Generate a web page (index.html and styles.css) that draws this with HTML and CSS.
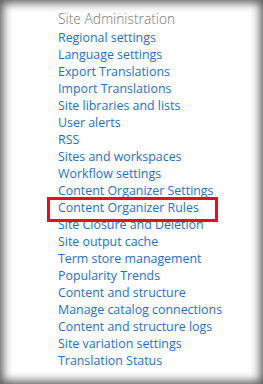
FILE: index.html
```html
<!DOCTYPE html>
<html>
<head>
<meta charset="utf-8">
<link rel="stylesheet" href="styles.css">
</head>
<body>
<div class="frame">
  <div class="panel">
    <h3 class="title">Site Administration</h3>
    <ul class="links">
      <li><a href="#">Regional settings</a></li>
      <li><a href="#">Language settings</a></li>
      <li><a href="#">Export Translations</a></li>
      <li><a href="#">Import Translations</a></li>
      <li><a href="#">Site libraries and lists</a></li>
      <li><a href="#">User alerts</a></li>
      <li><a href="#">RSS</a></li>
      <li><a href="#">Sites and workspaces</a></li>
      <li><a href="#">Workflow settings</a></li>
      <li><a href="#">Content Organizer Settings</a></li>
      <li class="marked"><a href="#">Content Organizer Rules</a></li>
      <li><a href="#">Site Closure and Deletion</a></li>
      <li><a href="#">Site output cache</a></li>
      <li><a href="#">Term store management</a></li>
      <li><a href="#">Popularity Trends</a></li>
      <li><a href="#">Content and structure</a></li>
      <li><a href="#">Manage catalog connections</a></li>
      <li><a href="#">Content and structure logs</a></li>
      <li><a href="#">Site variation settings</a></li>
      <li><a href="#">Translation Status</a></li>
    </ul>
  </div>
</div>
</body>
</html>
```

FILE: styles.css
```css
html, body {
  margin: 0;
  padding: 0;
  background: #fff;
}
.frame {
  width: 263px;
  height: 384px;
  box-sizing: border-box;
  background: #fff;
  box-shadow: inset 0 0 10px 3px #5a5a5a;
  overflow: hidden;
}
.panel {
  padding: 9px 0 0 58px;
  font-family: "Open Sans", "Liberation Sans", sans-serif;
}
.title {
  margin: 0;
  font-size: 13.8px;
  font-weight: 300;
  color: #777;
  line-height: 20px;
}
.links {
  list-style: none;
  margin: 0;
  padding: 0;
}
.links li {
  line-height: 17px;
  font-size: 12.4px;
  white-space: nowrap;
}
.links a {
  color: #1f6fc5;
  text-decoration: none;
}
.links li.marked {
  position: relative;
}
.links li.marked::after {
  content: "";
  position: absolute;
  left: -11px;
  top: -2px;
  width: 171px;
  height: 25px;
  box-sizing: border-box;
  border: 3px solid #e3101d;
}
```
